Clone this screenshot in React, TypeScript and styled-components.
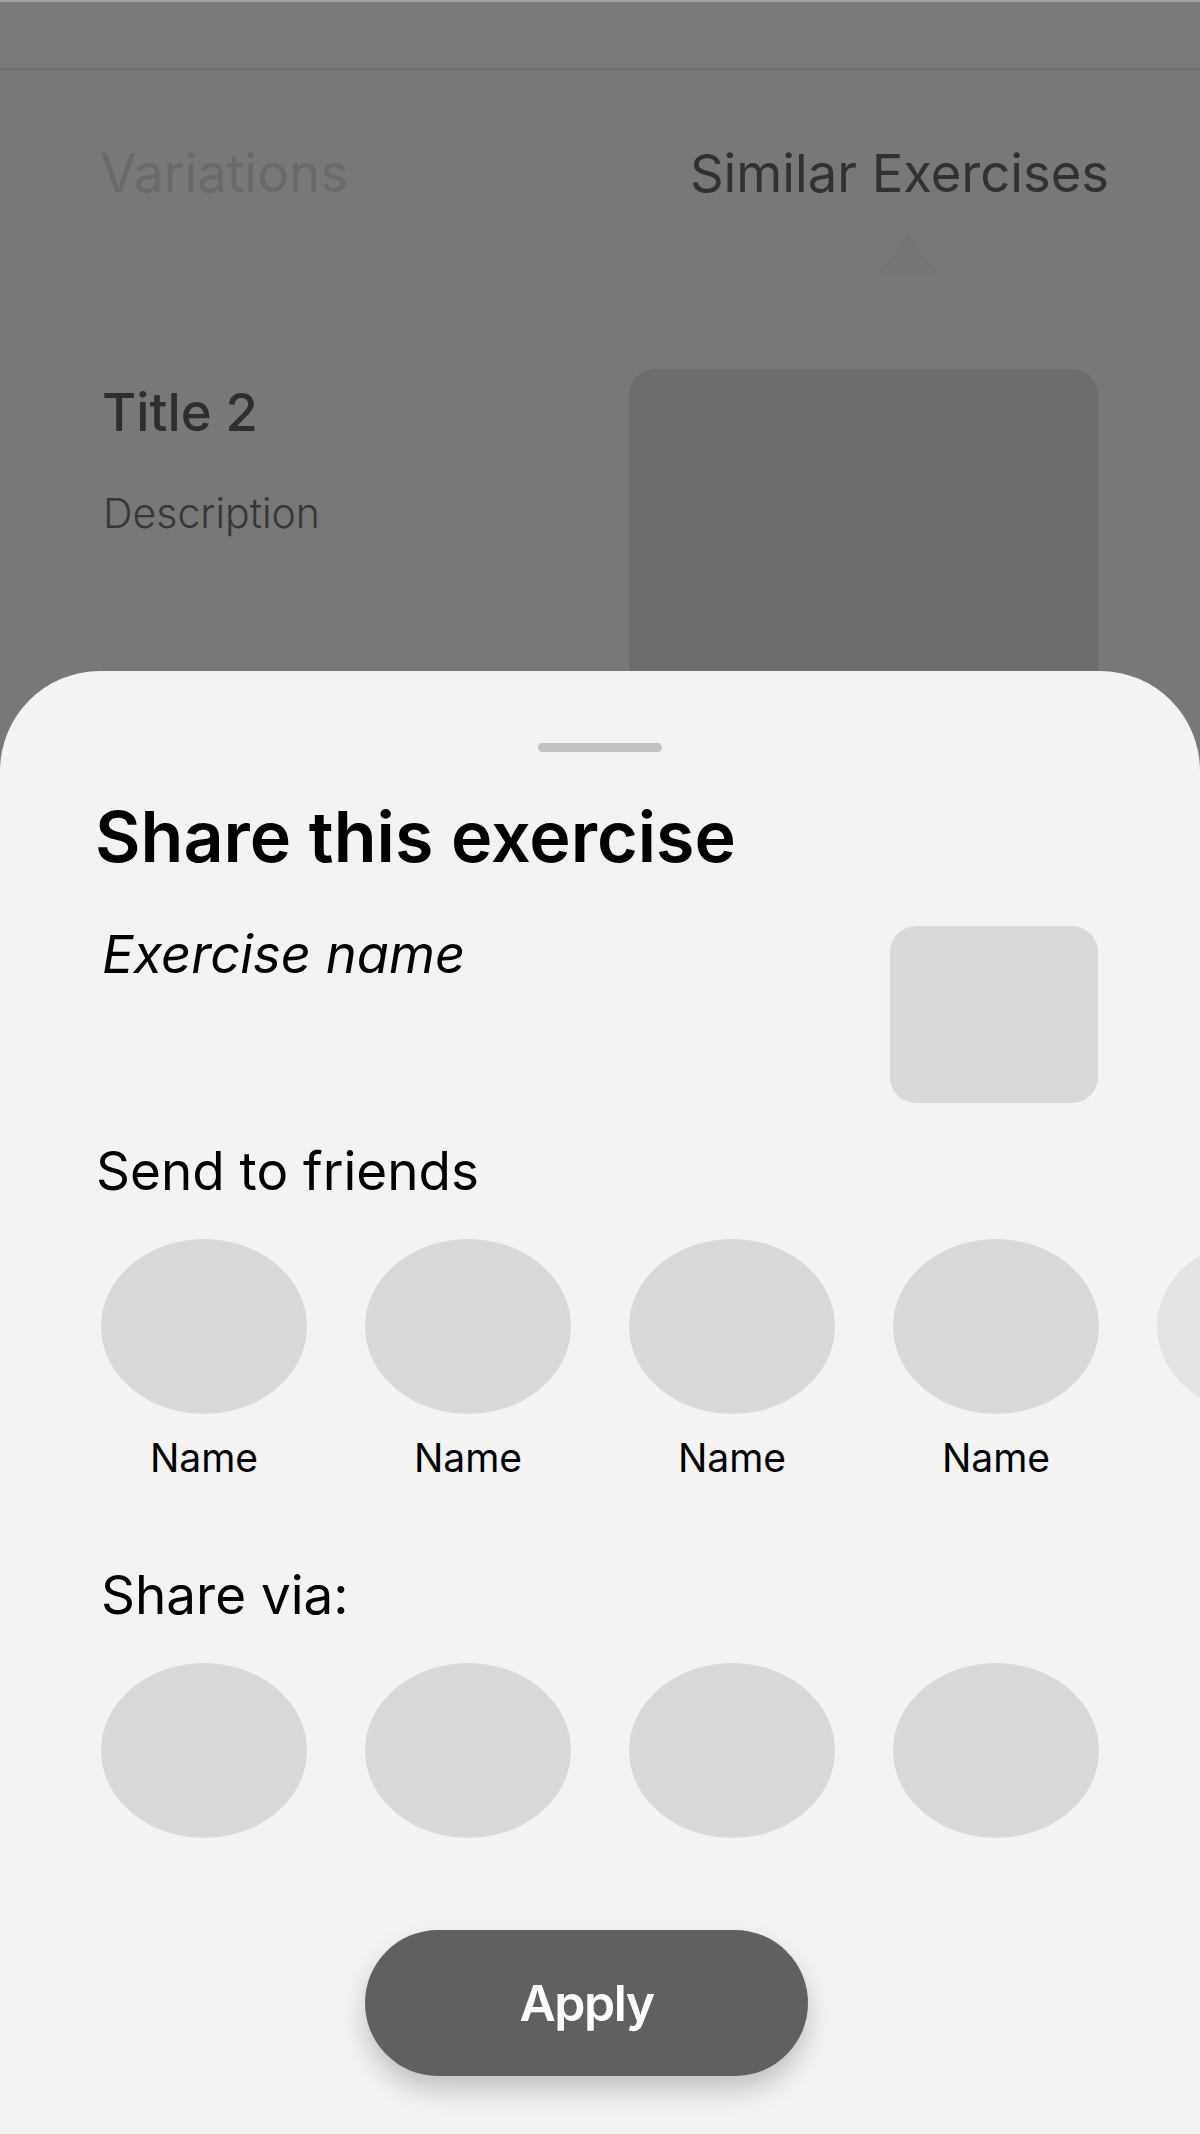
import React from 'react';
import styled, { createGlobalStyle } from 'styled-components';

const GlobalStyle = createGlobalStyle`
  html, body {
    margin: 0;
    padding: 0;
    background: #787878;
  }
  body {
    font-family: Inter, 'Noto Sans', 'Liberation Sans', sans-serif;
  }
  * {
    box-sizing: border-box;
  }
`;

const Screen = styled.div`
  position: relative;
  width: 1200px;
  height: 2134px;
  overflow: hidden;
  background: #787878;
`;

const TopBar = styled.div`
  height: 70px;
  background: #797979;
  border-top: 2px solid #a3a3a3;
  border-bottom: 2px solid #6f6f6f;
`;

const TabBar = styled.div`
  position: relative;
  height: 202px;
  display: flex;
  justify-content: space-between;
  align-items: flex-start;
  padding: 77px 91px 0 100px;
  box-shadow: 0 2px 6px rgba(0, 0, 0, 0.02);
`;

const Tab = styled.div<{ $active?: boolean }>`
  position: relative;
  font-size: ${({ $active }) => ($active ? 52.5 : 53)}px;
  line-height: 1;
  font-weight: 400;
  color: ${({ $active }) => ($active ? '#313131' : '#6a6a6a')};
`;

const TabPointer = styled.span`
  position: absolute;
  left: 50%;
  top: 86px;
  margin-left: -20px;
  width: 0;
  height: 0;
  border-left: 29px solid transparent;
  border-right: 29px solid transparent;
  border-bottom: 40px solid rgba(0, 0, 0, 0.022);
`;

const Card = styled.div`
  display: grid;
  grid-template-columns: 1fr 469px;
  column-gap: 40px;
  padding: 97px 102px 0 102px;
`;

const CardText = styled.div`
  padding-top: 17px;
  display: flex;
  flex-direction: column;
`;

const CardTitle = styled.div`
  font-size: 52.5px;
  line-height: 1;
  font-weight: 500;
  color: #2e2e2e;
`;

const CardDescription = styled.div`
  margin-top: 54px;
  margin-left: 1px;
  font-size: 41px;
  line-height: 1;
  font-weight: 300;
  color: #363636;
`;

const CardImage = styled.div`
  height: 420px;
  border-radius: 26px;
  background: #6d6d6d;
`;

const Sheet = styled.div`
  position: absolute;
  top: 671px;
  left: 0;
  right: 0;
  bottom: 0;
  background: #f3f3f3;
  border-radius: 100px 100px 0 0;
  overflow: hidden;
  display: flex;
  flex-direction: column;
  padding: 72px 0 0 0;
`;

const Handle = styled.div`
  align-self: center;
  width: 124px;
  height: 9px;
  border-radius: 5px;
  background: #c2c2c2;
`;

const SheetTitle = styled.h2`
  margin: 50px 0 0 95px;
  font-size: 70px;
  line-height: 1;
  font-weight: 600;
  color: #000;
`;

const ExerciseRow = styled.div`
  display: flex;
  justify-content: space-between;
  align-items: flex-start;
  margin-top: 54px;
  padding: 0 102px 0 102px;
`;

const ExerciseName = styled.div`
  margin-top: 2px;
  font-size: 52.5px;
  line-height: 1;
  font-style: italic;
  color: #000;
`;

const Thumb = styled.div`
  width: 208px;
  height: 177px;
  border-radius: 26px;
  background: #d9d9d9;
`;

const SectionLabel = styled.div<{ $indent: number; $gap: number }>`
  margin: ${({ $gap }) => $gap}px 0 0 ${({ $indent }) => $indent}px;
  font-size: 53px;
  line-height: 1;
  font-weight: 400;
  color: #000;
`;

const CircleRow = styled.div`
  display: flex;
  gap: 58px;
  margin-top: 41px;
  padding-left: 101px;
  white-space: nowrap;
`;

const Person = styled.div`
  flex: 0 0 206px;
  display: flex;
  flex-direction: column;
  align-items: center;
`;

const Avatar = styled.div<{ $faded?: boolean }>`
  width: 206px;
  height: 175px;
  border-radius: 50%;
  background: ${({ $faded }) => ($faded ? '#e4e4e4' : '#d9d9d9')};
`;

const PersonName = styled.div`
  margin-top: 24px;
  font-size: 39px;
  line-height: 1;
  color: #000;
`;

const ButtonRow = styled.div`
  display: flex;
  justify-content: center;
  margin-top: 92px;
  padding-right: 27px;
`;

const ApplyButton = styled.button`
  width: 443px;
  height: 146px;
  border: none;
  border-radius: 73px;
  background: #606060;
  color: #fff;
  font-family: Inter, 'Noto Sans', sans-serif;
  font-size: 50px;
  font-weight: 600;
  letter-spacing: -1.5px;
  box-shadow: 0 14px 26px rgba(0, 0, 0, 0.2);
  cursor: pointer;
`;

const friends = ['Name', 'Name', 'Name', 'Name', ''];
const apps = [1, 2, 3, 4];

export default function App() {
  return (
    <>
      <GlobalStyle />
      <Screen>
        <TopBar />
        <TabBar>
          <Tab>Variations</Tab>
          <Tab $active>
            Similar Exercises
            <TabPointer />
          </Tab>
        </TabBar>

        <Card>
          <CardText>
            <CardTitle>Title 2</CardTitle>
            <CardDescription>Description</CardDescription>
          </CardText>
          <CardImage />
        </Card>

        <Sheet>
          <Handle />
          <SheetTitle>Share this exercise</SheetTitle>

          <ExerciseRow>
            <ExerciseName>Exercise name</ExerciseName>
            <Thumb />
          </ExerciseRow>

          <SectionLabel $indent={96} $gap={42}>Send to friends</SectionLabel>
          <CircleRow>
            {friends.map((name, i) => (
              <Person key={i}>
                <Avatar $faded={i === friends.length - 1} />
                {name && <PersonName>{name}</PersonName>}
              </Person>
            ))}
          </CircleRow>

          <SectionLabel $indent={101} $gap={92}>Share via:</SectionLabel>
          <CircleRow>
            {apps.map((a) => (
              <Person key={a}>
                <Avatar />
              </Person>
            ))}
          </CircleRow>

          <ButtonRow>
            <ApplyButton>Apply</ApplyButton>
          </ButtonRow>
        </Sheet>
      </Screen>
    </>
  );
}
